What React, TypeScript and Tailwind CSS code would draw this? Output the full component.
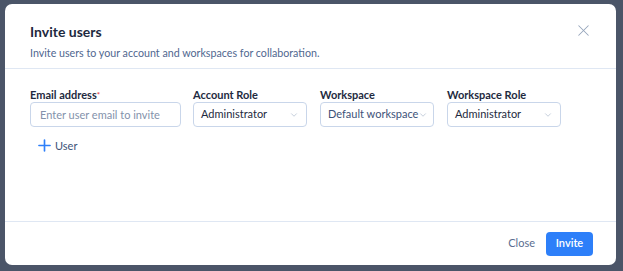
import { X, Plus, ChevronDown } from 'lucide-react';

const selects = [
  { label: 'Account Role', value: 'Administrator' },
  { label: 'Workspace', value: 'Default workspace' },
  { label: 'Workspace Role', value: 'Administrator' },
];

export default function App() {
  return (
    <div className="h-[271px] w-[623px] bg-[#4b5568] pt-[4px] pl-[5px] font-['Lato',sans-serif]">
      <div className="w-[611px] h-[261px] bg-white rounded-[7px] flex flex-col">
        {/* Header */}
        <div className="relative px-[25px] pt-[19px] pb-[8px] border-b border-[#dfe7f3]">
          <h2 className="text-[14px] leading-[18px] font-bold text-[#1e2a40]">Invite users</h2>
          <p className="mt-[5px] text-[10.7px] leading-[14px] text-[#50678f]">
            Invite users to your account and workspaces for collaboration.
          </p>
          <button className="absolute right-[23px] top-[17px] text-[#97a5bb]">
            <X className="w-[19px] h-[19px]" strokeWidth={1.3} />
          </button>
        </div>

        {/* Body */}
        <div className="flex-1 px-[25px] pt-[19px]">
          <div className="flex">
            <div className="flex flex-col w-[151px]">
              <label className="text-[11px] leading-[14px] font-bold text-[#1e2a40]">
                Email address<span className="text-[#e5484d] text-[8px] align-top">*</span>
              </label>
              <input
                placeholder="Enter user email to invite"
                className="h-[25px] rounded-[4px] border border-[#c9d6ea] px-[9px] text-[11px] text-[#1e2a40] placeholder:text-[#8392ab] outline-none"
              />
            </div>
            {selects.map((s, i) => (
              <div key={i} className={`flex flex-col w-[114px] ${i === 0 ? 'ml-[12px]' : 'ml-[13px]'}`}>
                <label className="text-[11px] leading-[14px] font-bold text-[#1e2a40]">{s.label}</label>
                <div className="h-[25px] rounded-[4px] border border-[#c9d6ea] pl-[7px] pr-[7px] flex items-center justify-between">
                  <span className={`text-[11px] whitespace-nowrap ${i === 1 ? 'text-[#3d5278]' : 'text-[#1e2a40]'}`}>{s.value}</span>
                  <ChevronDown className="w-[10px] h-[10px] text-[#a4b2c7] shrink-0" strokeWidth={1.5} />
                </div>
              </div>
            ))}
          </div>
          <button className="mt-[9px] ml-[5px] flex items-center gap-[1px] text-[11px] leading-[14px] text-[#3d5278]">
            <Plus className="w-[19px] h-[19px] text-[#2d7ff9]" strokeWidth={2.1} />
            User
          </button>
        </div>

        {/* Footer */}
        <div className="h-[44px] border-t border-[#dfe7f3] flex items-center justify-end gap-[11px] pr-[23px]">
          <button className="text-[11px] text-[#5a6e90]">Close</button>
          <button className="h-[24px] w-[47px] rounded-[4px] bg-[#2d7ff9] text-white text-[11px] font-semibold">Invite</button>
        </div>
      </div>
    </div>
  );
}
